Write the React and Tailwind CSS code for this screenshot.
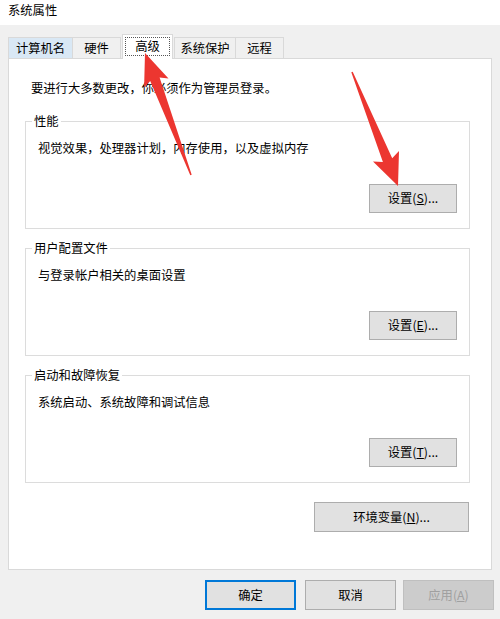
import React from "react";

const FONT = { fontFamily: '"Noto Sans CJK SC", "Noto Sans", sans-serif' };

function arrowPoints(tail, tip, headLen, headHalf, shaftHalf, tailHalf, barb) {
  const dx = tip[0] - tail[0];
  const dy = tip[1] - tail[1];
  const len = Math.hypot(dx, dy);
  const ux = dx / len, uy = dy / len;
  const nx = -uy, ny = ux;
  const bx = tip[0] - ux * headLen, by = tip[1] - uy * headLen;
  const cx = tip[0] - ux * (headLen + barb), cy = tip[1] - uy * (headLen + barb);
  const pts = [
    [tip[0], tip[1]],
    [cx + nx * headHalf, cy + ny * headHalf],
    [bx + nx * shaftHalf, by + ny * shaftHalf],
    [tail[0] + nx * tailHalf, tail[1] + ny * tailHalf],
    [tail[0] - nx * tailHalf, tail[1] - ny * tailHalf],
    [bx - nx * shaftHalf, by - ny * shaftHalf],
    [cx - nx * headHalf, cy - ny * headHalf],
  ];
  return pts.map((p) => p[0].toFixed(1) + "," + p[1].toFixed(1)).join(" ");
}

function Btn({ children, className = "" }) {
  return (
    <div
      className={
        "flex items-center justify-center h-[29px] w-[88px] bg-[#e1e1e1] border border-[#adadad] text-[12.3px] text-black " +
        className
      }
    >
      {children}
    </div>
  );
}

function Group({ title, desc, children }) {
  return (
    <div className="relative w-[445px] h-[108px] border border-[#dcdcdc] pt-[18px] pl-[12px]">
      <div className="absolute left-[6px] -top-[9px] bg-white px-[2px] text-[12.3px] leading-[16px] text-black">
        {title}
      </div>
      <div className="text-[12.3px] leading-[16px] text-black">{desc}</div>
      <div className="flex justify-end pr-[12px] mt-[28px]">{children}</div>
    </div>
  );
}

export default function App() {
  return (
    <div className="relative w-[500px] h-[619px] bg-[#f0f0f0] overflow-hidden" style={FONT}>
      {/* title bar */}
      <div className="h-[25px] bg-white pl-[8px] text-[12.3px] leading-[20px] text-black">系统属性</div>

      {/* tabs */}
      <div className="relative z-10 flex items-end pl-[8px] h-[33px]">
        <div className="w-[65px] h-[21px] border border-b-0 border-[#d9d9d9] bg-[#d9e8f5] flex items-center justify-center text-[12.3px] text-black">
          计算机名
        </div>
        <div className="w-[48px] h-[21px] border border-b-0 border-l-0 border-[#d9d9d9] bg-[#f0f0f0] flex items-center justify-center text-[12.3px] text-black">
          硬件
        </div>
        <div className="ml-[1px] w-[51px] h-[25px] -mb-px border border-b-0 border-[#d9d9d9] bg-white p-[2px] pb-[3px]">
          <div className="h-full border border-dotted border-[#555] flex items-center justify-center text-[12.3px] text-black">
            高级
          </div>
        </div>
        <div className="ml-[1px] w-[62px] h-[21px] border border-b-0 border-[#d9d9d9] bg-[#f0f0f0] flex items-center justify-center text-[12.3px] text-black">
          系统保护
        </div>
        <div className="w-[48px] h-[21px] border border-b-0 border-l-0 border-[#d9d9d9] bg-[#f0f0f0] flex items-center justify-center text-[12.3px] text-black">
          远程
        </div>
      </div>

      {/* panel */}
      <div className="ml-[8px] w-[484px] h-[512px] border border-[#d9d9d9] bg-white pt-[21px] px-[16px]">
        <div className="pl-[6px] text-[12.3px] leading-[16px] text-black">
          要进行大多数更改，你必须作为管理员登录。
        </div>
        <div className="mt-[25px] flex flex-col gap-[19px]">
          <Group title="性能" desc="视觉效果，处理器计划，内存使用，以及虚拟内存">
            <Btn>
              设置(<u>S</u>)...
            </Btn>
          </Group>
          <Group title="用户配置文件" desc="与登录帐户相关的桌面设置">
            <Btn>
              设置(<u>E</u>)...
            </Btn>
          </Group>
          <Group title="启动和故障恢复" desc="系统启动、系统故障和调试信息">
            <Btn>
              设置(<u>T</u>)...
            </Btn>
          </Group>
        </div>
        <div className="w-[445px] flex justify-end pr-[1px] mt-[19px]">
          <Btn className="w-[155px] h-[30px]">
            环境变量(<u>N</u>)...
          </Btn>
        </div>
      </div>

      {/* bottom buttons */}
      <div className="flex mt-[10px] pl-[205px]">
        <div className="w-[91px] h-[30px] border-2 border-[#0078d7] bg-[#e1e1e1] flex items-center justify-center text-[12.3px] text-black">
          确定
        </div>
        <div className="ml-[9px] w-[91px] h-[30px] border border-[#adadad] bg-[#e1e1e1] flex items-center justify-center text-[12.3px] text-black">
          取消
        </div>
        <div className="ml-[7px] w-[91px] h-[30px] border border-[#bfbfbf] bg-[#cccccc] flex items-center justify-center text-[12.3px] text-[#a0a0a0]">
          应用(<u>A</u>)
        </div>
      </div>

      {/* red annotation arrows */}
      <svg className="absolute inset-0 pointer-events-none z-20" width="500" height="619" viewBox="0 0 500 619">
        <polygon
          points={arrowPoints([191, 175], [145, 53], 28, 13, 5, 0.8, 4)}
          fill="#ec3630"
        />
        <polygon
          points={arrowPoints([352, 72], [398, 186], 28, 14, 5, 0.8, 4)}
          fill="#ec3630"
        />
      </svg>
    </div>
  );
}
